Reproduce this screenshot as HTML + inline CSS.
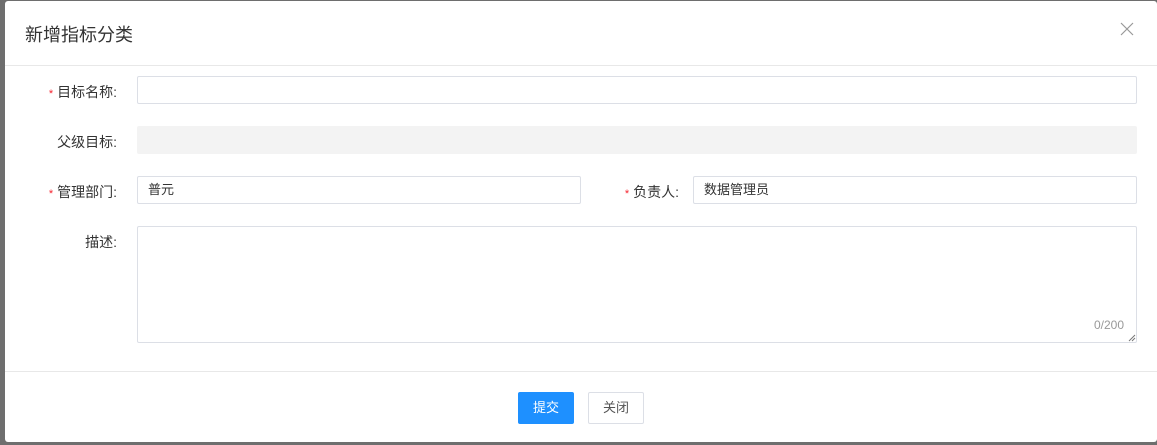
<!DOCTYPE html>
<html><head><meta charset="utf-8"><style>
*{box-sizing:border-box;margin:0;padding:0}
body{width:1157px;height:445px;background:#6e6e6e;position:relative;overflow:hidden;font-family:"Liberation Sans","Noto Sans CJK SC",sans-serif;font-size:13px;color:#333}
.m{position:absolute;left:5px;top:1px;width:1152px;height:441px;background:#fff;border-radius:3px}
.a{position:absolute}
.t{left:20px;top:20px;font-size:18px;color:#333}
.hl{left:0;width:1152px;height:1px;background:#e8e8e8}
.lb{font-size:14px;color:#333;text-align:right;width:100px;white-space:nowrap}
.s{color:#f5222d;margin-right:4px;font-size:11px}
.in{border:1px solid #dcdfe6;border-radius:2px;height:28px;background:#fff;padding:0 10px;line-height:26px;color:#333}
.btn{height:32px;border-radius:2px;width:56px;text-align:center;line-height:30px;font-size:13px}
</style></head><body>
<div class="m">
<div class="a t">新增指标分类</div>
<svg class="a" style="left:1115px;top:21px" width="14" height="14"><path d="M1 1L13 13M13 1L1 13" stroke="#999" stroke-width="1.2"/></svg>
<div class="a hl" style="top:64px"></div>
<div class="a lb" style="left:12px;top:81px"><span class="s">*</span>目标名称:</div>
<div class="a in" style="left:132px;top:75px;width:1000px"></div>
<div class="a lb" style="left:12px;top:131px">父级目标:</div>
<div class="a in" style="left:132px;top:125px;width:1000px;background:#f3f3f3;border-color:#f3f3f3"></div>
<div class="a lb" style="left:12px;top:181px"><span class="s">*</span>管理部门:</div>
<div class="a in" style="left:132px;top:175px;width:444px">普元</div>
<div class="a lb" style="left:574px;top:181px"><span class="s">*</span>负责人:</div>
<div class="a in" style="left:688px;top:175px;width:444px">数据管理员</div>
<div class="a lb" style="left:12px;top:231px">描述:</div>
<div class="a in" style="left:132px;top:225px;width:1000px;height:117px"></div>
<div class="a" style="left:1089px;top:317px;font-size:12px;color:#999">0/200</div>
<svg class="a" style="left:1123px;top:333px" width="8" height="8"><path d="M7 1L1 7M7 4L4 7" stroke="#777" stroke-width="1"/></svg>
<div class="a hl" style="top:370px"></div>
<div class="a btn" style="left:513px;top:391px;background:#1e90ff;color:#fff;border:1px solid #1e90ff;width:56px">提交</div>
<div class="a btn" style="left:583px;top:391px;border:1px solid #dcdfe6;color:#555">关闭</div>
</div>
</body></html>
